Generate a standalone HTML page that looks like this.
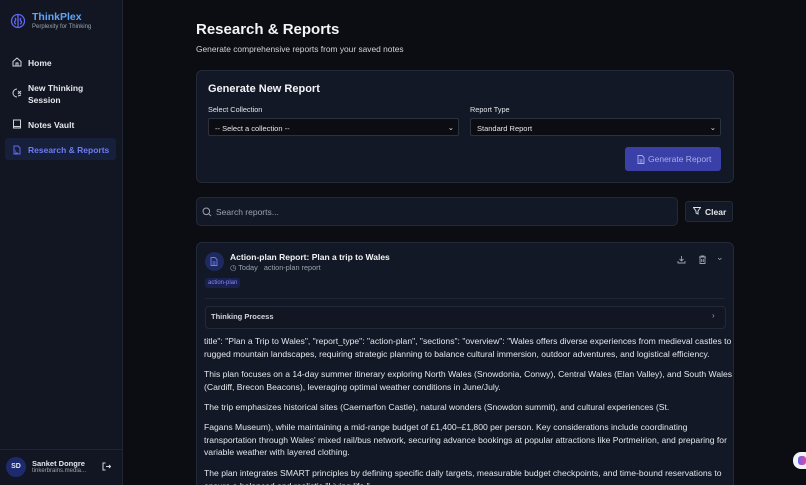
<!DOCTYPE html>
<html style="overflow:hidden;height:485px"><head><style>
*{box-sizing:border-box;margin:0;padding:0}
body{width:806px;height:485px;overflow:hidden;background:#0b0d12;font-family:"Liberation Sans",sans-serif;color:#e5e7eb;position:relative}
.sb{position:absolute;left:0;top:0;width:123px;height:485px;background:#111622;border-right:1px solid #1f2533}
.abs{position:absolute}
.nav{position:absolute;left:12px;font-size:8.5px;font-weight:bold;color:#e5e7eb}
.card{position:absolute;background:#121826;border:1px solid #222a38;border-radius:6px}
.sel{position:absolute;height:18px;background:#0b0d12;border:1px solid #2a3240;border-radius:2px;font-size:7.5px;color:#e5e7eb;padding:5px 6px}
.p{position:absolute;left:204px;width:532px;font-size:8.6px;line-height:12.5px;color:#e5e7eb}
</style></head><body>
<div class="sb">
  <svg class="abs" style="left:10px;top:13px" width="16" height="16" viewBox="0 0 16 16" fill="none" stroke="#6366f1" stroke-width="1.3"><ellipse cx="8" cy="8" rx="6.5" ry="6.5"/><path d="M8 2v12M5 5c1 1 1 2 0 3s0 3 1 3M11 5c-1 1-1 2 0 3s0 3-1 3"/></svg>
  <div class="abs" style="left:32px;top:11px;font-size:10.5px;font-weight:bold;color:#60a5fa">ThinkPlex</div>
  <div class="abs" style="left:32px;top:24px;font-size:6px;color:#9ca3af">Perplexity for Thinking</div>
  <svg class="abs" style="left:12px;top:57px" width="10" height="10" viewBox="0 0 10 10" fill="none" stroke="#d1d5db" stroke-width="1"><path d="M1 4.5L5 1l4 3.5V9H1z M4 9V6h2v3"/></svg>
  <div class="nav" style="left:28px;top:58px">Home</div>
  <svg class="abs" style="left:12px;top:88px" width="10" height="10" viewBox="0 0 10 10" fill="none" stroke="#d1d5db" stroke-width="1"><path d="M5 1a4 4 0 1 0 0 8M6 3l3 3M9 3L6 6M6 8l3-1"/></svg>
  <div class="nav" style="left:28px;top:83px;line-height:11.5px">New Thinking<br>Session</div>
  <svg class="abs" style="left:12px;top:119px" width="10" height="10" viewBox="0 0 10 10" fill="none" stroke="#d1d5db" stroke-width="1"><path d="M1.5 1h7v8h-7zM1.5 7.5h7"/></svg>
  <div class="nav" style="left:28px;top:120px">Notes Vault</div>
  <div class="abs" style="left:5px;top:138px;width:111px;height:22px;background:#17203a;border-radius:3px"></div>
  <svg class="abs" style="left:12px;top:145px" width="10" height="10" viewBox="0 0 10 10" fill="none" stroke="#6366f1" stroke-width="1"><path d="M2 1h4l2 2v6H2zM3 6h1M3 8h3"/></svg>
  <div class="nav" style="left:28px;top:145px;color:#6b7cf5">Research &amp; Reports</div>
  <div class="abs" style="left:0;top:449px;width:123px;border-top:1px solid #1f2533"></div>
  <div class="abs" style="left:6px;top:457px;width:20px;height:20px;border-radius:50%;background:#1e2a6e;font-size:7px;font-weight:bold;color:#e5e7eb;text-align:center;line-height:20px">SD</div>
  <div class="abs" style="left:32px;top:459px;font-size:7.5px;font-weight:bold">Sanket Dongre</div>
  <div class="abs" style="left:32px;top:468px;font-size:6px;color:#9ca3af">tinkerbrains.media...</div>
  <svg class="abs" style="left:102px;top:462px" width="9" height="9" viewBox="0 0 9 9" fill="none" stroke="#d1d5db" stroke-width="1"><path d="M3.5 1H1v7h2.5M4 4.5h4.5M7 3l1.5 1.5L7 6"/></svg>
</div>

<div class="abs" style="left:196px;top:21px;font-size:15px;font-weight:bold;color:#f3f4f6">Research &amp; Reports</div>
<div class="abs" style="left:196px;top:44px;font-size:8.4px;color:#d1d5db">Generate comprehensive reports from your saved notes</div>

<div class="card" style="left:196px;top:70px;width:538px;height:113px">
  <div class="abs" style="left:11px;top:12px;font-size:11px;font-weight:bold;color:#f3f4f6">Generate New Report</div>
  <div class="abs" style="left:11px;top:34px;font-size:7.3px">Select Collection</div>
  <div class="abs" style="left:273px;top:34px;font-size:7.3px">Report Type</div>
  <div class="sel" style="left:11px;top:47px;width:251px">-- Select a collection --<span style="position:absolute;right:4px;top:4px">⌄</span></div>
  <div class="sel" style="left:273px;top:47px;width:251px">Standard Report<span style="position:absolute;right:4px;top:4px">⌄</span></div>
  <div class="abs" style="left:428px;top:76px;width:96px;height:24px;background:#3b3fa8;border-radius:3px;font-size:8.5px;color:#a5b0e8;line-height:24px;padding-left:23px">Generate Report</div>
  <svg class="abs" style="left:440px;top:84px" width="8" height="9" viewBox="0 0 8 9" fill="none" stroke="#a5b0e8" stroke-width=".9"><path d="M1 .5h4l2 2v6H1zM2.5 5h3M2.5 7h3"/></svg>
</div>

<div class="card" style="left:196px;top:197px;width:482px;height:29px;border-radius:5px"></div>
<svg class="abs" style="left:202px;top:207px" width="10" height="10" viewBox="0 0 10 10" fill="none" stroke="#9ca3af" stroke-width="1"><circle cx="4.3" cy="4.3" r="3.3"/><path d="M6.8 6.8L9 9"/></svg>
<div class="abs" style="left:216px;top:207px;font-size:8.5px;color:#9ca3af">Search reports...</div>
<div class="card" style="left:685px;top:201px;width:48px;height:21px;border-radius:3px"></div>
<svg class="abs" style="left:693px;top:207px" width="8" height="8" viewBox="0 0 8 8" fill="none" stroke="#e5e7eb" stroke-width=".9"><path d="M.5.5h7L5 4v3L3 6V4z"/></svg>
<div class="abs" style="left:705px;top:207px;font-size:8.5px;font-weight:bold">Clear</div>

<div class="card" style="left:196px;top:242px;width:538px;height:250px">
  <div class="abs" style="left:8px;top:9px;width:19px;height:19px;border-radius:50%;background:#1e2a5e"></div>
  <svg class="abs" style="left:13px;top:14px" width="8" height="9" viewBox="0 0 8 9" fill="none" stroke="#6b7cf5" stroke-width=".9"><path d="M1 .5h4l2 2v6H1zM2.5 5h3M2.5 7h3"/></svg>
  <div class="abs" style="left:33px;top:9px;font-size:8.5px;font-weight:bold;color:#f3f4f6">Action-plan Report: Plan a trip to Wales</div>
  <div class="abs" style="left:33px;top:20px;font-size:7.3px;color:#9ca3af">◷ Today &nbsp; action-plan report</div>
  <svg class="abs" style="left:480px;top:12px" width="9" height="9" viewBox="0 0 9 9" fill="none" stroke="#9ca3af" stroke-width=".9"><path d="M4.5 1v5M2.5 4l2 2 2-2M1 6v2h7V6"/></svg>
  <svg class="abs" style="left:501px;top:12px" width="9" height="9" viewBox="0 0 9 9" fill="none" stroke="#9ca3af" stroke-width=".9"><path d="M1 2h7M3 2V1h3v1M2 2v6.5h5V2M3.7 4v3M5.3 4v3"/></svg>
  <div class="abs" style="left:519px;top:9px;font-size:9px;color:#9ca3af">⌄</div>
  <div class="abs" style="left:8px;top:35px;height:10px;padding:0 3px;background:#1a2050;border-radius:3px;font-size:6px;color:#818cf8;line-height:10px">action-plan</div>
  <div class="abs" style="left:8px;top:55px;width:520px;border-top:1px solid #1f2533"></div>
  <div class="abs" style="left:8px;top:63px;width:521px;height:23px;border:1px solid #222a38;border-radius:4px;background:#111622"></div>
  <div class="abs" style="left:14px;top:69px;font-size:7.5px;font-weight:bold;color:#d1d5db">Thinking Process</div>
  <div class="abs" style="left:515px;top:68px;font-size:8px;color:#9ca3af">›</div>
</div>
<div class="p" style="top:335px">title": "Plan a Trip to Wales", "report_type": "action-plan", "sections": "overview": "Wales offers diverse experiences from medieval castles to rugged mountain landscapes, requiring strategic planning to balance cultural immersion, outdoor adventures, and logistical efficiency.</div>
<div class="p" style="top:368px">This plan focuses on a 14-day summer itinerary exploring North Wales (Snowdonia, Conwy), Central Wales (Elan Valley), and South Wales (Cardiff, Brecon Beacons), leveraging optimal weather conditions in June/July.</div>
<div class="p" style="top:401px">The trip emphasizes historical sites (Caernarfon Castle), natural wonders (Snowdon summit), and cultural experiences (St.</div>
<div class="p" style="top:421px">Fagans Museum), while maintaining a mid-range budget of £1,400–£1,800 per person. Key considerations include coordinating transportation through Wales' mixed rail/bus network, securing advance bookings at popular attractions like Portmeirion, and preparing for variable weather with layered clothing.</div>
<div class="p" style="top:467px">The plan integrates SMART principles by defining specific daily targets, measurable budget checkpoints, and time-bound reservations to ensure a balanced and realistic "Living life."</div>
<div class="abs" style="left:793px;top:452px;width:20px;height:17px;border-radius:8px;background:#f3f4f6"></div>
<div class="abs" style="left:798px;top:456px;width:8px;height:9px;border-radius:3px;background:linear-gradient(90deg,#6366f1,#ec4899)"></div>
</body></html>
